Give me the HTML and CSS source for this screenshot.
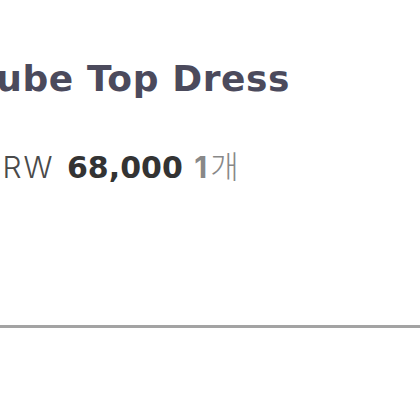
FILE: index.html
```html
<!DOCTYPE html>
<html lang="ko">
<head>
<meta charset="utf-8">
<link rel="stylesheet" href="styles.css">
</head>
<body>
<div class="item">
  <h1 class="name">Tube Top Dress</h1>
  <p class="price"><span class="cur">KRW</span> <b class="amount">68,000</b> <span class="qty"><b class="count">1</b><span class="unit">개</span></span></p>
</div>
<hr class="divider">
</body>
</html>
```
FILE: styles.css
```css
html, body { margin: 0; padding: 0; background: #fff; }
body { width: 420px; height: 420px; overflow: hidden; font-family: "DejaVu Sans", "Noto Sans CJK KR", sans-serif; }
.item { padding-top: 55px; height: 268px; box-sizing: border-box; }
.name {
  margin: 0 0 0 -25px;
  font-size: 36px;
  line-height: 48px;
  font-weight: 700;
  color: #4b4a5c;
  letter-spacing: 0.6px;
  white-space: nowrap;
}
.price {
  margin: 42px 0 0 -19px;
  font-size: 30px;
  line-height: 40px;
  color: #444;
  white-space: nowrap;
}
.cur { font-family: Inter, sans-serif; font-weight: 300; color: #4a4a4a; letter-spacing: 2px; margin-right: 3px; }
.amount { font-weight: 700; color: #333; }
.qty { color: #888; margin-left: 2px; }
.count { font-family: Inter, sans-serif; font-weight: 700; }
.unit { font-family: "Noto Sans CJK KR", sans-serif; font-weight: 300; font-size: 31px; margin-left: 3px; }
.divider { margin: 57px 0 0; border: 0; height: 3px; background: #a3a3a3; }
```
